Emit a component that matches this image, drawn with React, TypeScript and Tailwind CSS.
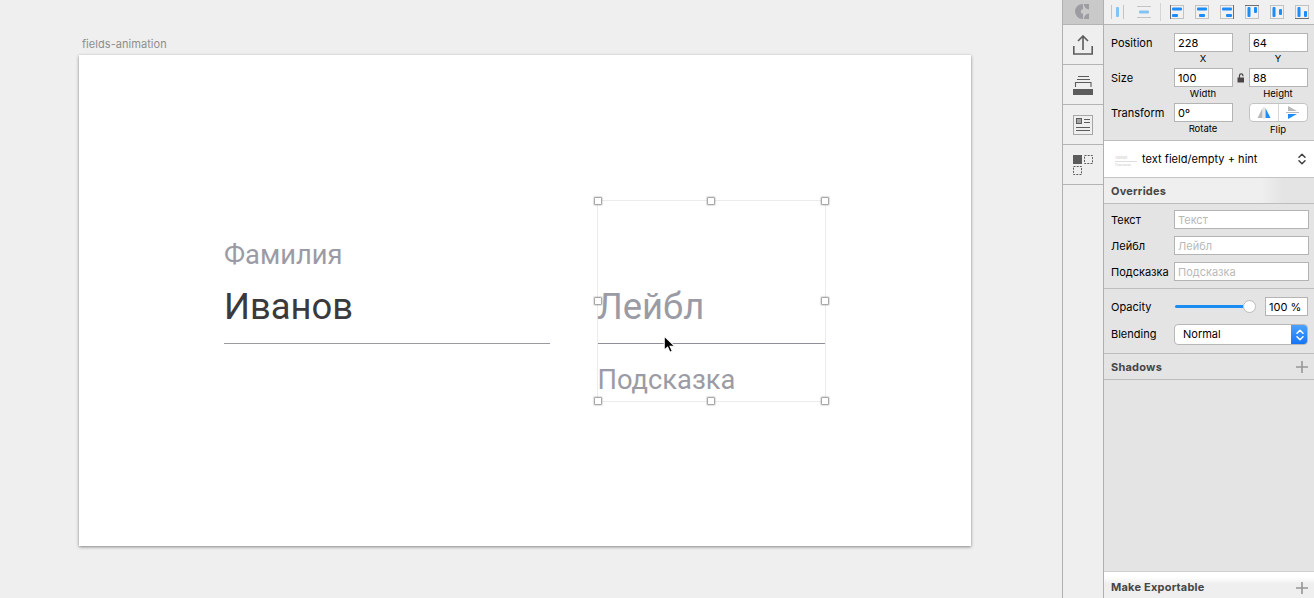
import React from 'react';
import clsx from 'clsx';

type AlignKind = 'left' | 'center' | 'right' | 'top' | 'middle' | 'bottom';

// x, y, width, height of the two blue bars in every align icon
const alignBars: Record<AlignKind, number[][]> = {
  left: [[2, 2.5, 10, 3], [2, 9, 6, 3]],
  center: [[2, 2.5, 10, 3], [4, 9, 6, 3]],
  right: [[2, 2.5, 10, 3], [6, 9, 6, 3]],
  top: [[2.5, 2, 3, 10], [9, 2, 3, 6]],
  middle: [[2.5, 2, 3, 10], [9, 4, 3, 6]],
  bottom: [[2.5, 2, 3, 10], [9, 6, 3, 6]],
};

const alignEdges: Partial<Record<AlignKind, string>> = {
  left: 'M.5 0v14',
  right: 'M13.5 0v14',
  top: 'M0 .5h14',
  bottom: 'M0 13.5h14',
};

const AlignIcon = ({ kind }: { kind: AlignKind }) => (
  <svg width="14" height="14" viewBox="0 0 14 14" className="shrink-0">
    <rect x=".5" y=".5" width="13" height="13" fill="#f2f2f2" stroke="#c2c2c2" />
    {alignEdges[kind] && <path d={alignEdges[kind]} stroke="#6f6f6f" />}
    {alignBars[kind].map(([x, y, w, h], i) => (
      <rect key={i} x={x} y={y} width={w} height={h} rx="1" fill="#1c8cf8" />
    ))}
  </svg>
);

const Chevrons = ({ className }: { className?: string }) => (
  <svg width="8" height="12" viewBox="0 0 8 12" fill="none" strokeWidth="1.5" strokeLinecap="round" strokeLinejoin="round" className={className}>
    <path d="M1 4.2 4 1.2l3 3M1 7.8l3 3 3-3" />
  </svg>
);

const Plus = () => (
  <svg width="12" height="12" viewBox="0 0 12 12" stroke="#969696" strokeWidth="1.6">
    <path d="M6 0v12M0 6h12" />
  </svg>
);

const Label = ({ children, className }: { children: React.ReactNode; className?: string }) => (
  <span className={clsx('w-[63px] shrink-0 whitespace-nowrap', className)}>{children}</span>
);

const Field = ({ value, className }: { value: string; className?: string }) => (
  <div className={clsx('flex h-[19px] shrink-0 items-center border border-[#b4b4b4] bg-white px-[3px] pt-[2px]', className)}>
    {value}
  </div>
);

const Caption = ({ children, className }: { children: React.ReactNode; className?: string }) => (
  <span className={clsx('mt-px h-3 text-center text-[9.5px] leading-3', className)}>{children}</span>
);

const Override = ({ name }: { name: string }) => (
  <div className="flex h-[19px] items-center">
    <Label className="pt-[2px]">{name}</Label>
    <Field value={name} className="w-[135px] text-[#b9b9b9]" />
  </div>
);

const Tool = ({ children }: { children: React.ReactNode }) => (
  <div className="flex h-10 items-center justify-center border-b border-[#b4b4b4]">{children}</div>
);

const handles = [
  'left-[-4.5px] top-[-4.5px]',
  'left-[109px] top-[-4.5px]',
  'left-[223px] top-[-4.5px]',
  'left-[-4.5px] top-[95.5px]',
  'left-[223px] top-[95.5px]',
  'left-[-4.5px] top-[195.5px]',
  'left-[109px] top-[195.5px]',
  'left-[223px] top-[195.5px]',
];

const Canvas = () => (
  <main className="flex-1 pl-[79px] pt-[37px]">
    <div className="h-[18px] pl-[3px] text-[11px] leading-[15px] tracking-[0.05px] text-[#8e8e8e]">fields-animation</div>
    <div className="relative h-[491px] w-[892px] bg-white font-['Roboto',sans-serif] leading-none text-[#9b9ba5] shadow-[0_1px_3px_rgba(0,0,0,0.45)]">
      {/* Filled field */}
      <div className="absolute left-[145px] top-[186px] w-[326px]">
        <div className="text-[27.3px] leading-7">Фамилия</div>
        <div className="mt-[20px] text-[36.4px] leading-9 text-[#3b393b]">Иванов</div>
        <div className="mt-[18px] h-px bg-[#9a9aa3]" />
      </div>

      {/* Selected symbol */}
      <div className="absolute left-[518px] top-[145px] h-[202px] w-[229px] border border-[#ececec]">
        <div className="-ml-px mt-[88px] text-[36.4px] leading-9">Лейбл</div>
        <div className="mt-[18px] h-px bg-[#8f8f99]" />
        <div className="-ml-[0.5px] mt-[22px] text-[27.3px] leading-7">Подсказка</div>
        {handles.map((place) => (
          <span key={place} className={clsx('absolute size-[8px] rounded-[1px] border border-[#a8a8a8] bg-white shadow-[0_0_1px_1px_rgba(0,0,0,0.12)]', place)} />
        ))}
      </div>

      {/* Cursor */}
      <svg width="14" height="20" viewBox="0 0 14 20" className="absolute left-[584px] top-[280px]">
        <path d="M1.2 1v14.2l3.4-3.1 2.3 5.2 2.5-1.1-2.3-5h4.6z" fill="#000" stroke="#fff" strokeWidth="1.1" />
      </svg>
    </div>
  </main>
);

const Toolbar = () => (
  <aside className="w-[42px] shrink-0 border-x border-[#b0b0b0] bg-[#efefef]">
    <div className="flex h-[25px] items-center justify-center border-b border-[#b4b4b4] bg-[#c9c9c9] pb-[2px] pr-px">
      <svg width="15" height="15" viewBox="0 0 15 15" fill="#9c9ca2">
        <path d="M8 0v5.200a2.300 2.300 0 0 0 0 4.600V15H7.500a7.500 7.500 0 0 1 0-15z" />
        <path d="M9 0h5v5.500a5.300 5.300 0 0 1-5-5.500zM9 15h5V9.500a5.300 5.300 0 0 0-5 5.500z" />
      </svg>
    </div>
    <Tool>
      <svg width="20" height="20" viewBox="0 0 20 20" fill="none" stroke="#5c5c5c" strokeWidth="1.6">
        <path d="M.8 11v8h18.4v-8M10 15V1.5M5 6l5-5 5 5" />
      </svg>
    </Tool>
    <Tool>
      <svg width="20" height="20" viewBox="0 0 20 20" fill="none" stroke="#5c5c5c">
        <path d="M5 1.500h11M4 4.500h13M2.500 12V7.500h15.500V12" strokeWidth="1.1" />
        <path d="M0 14h20v6H0z" fill="#5c5c5c" stroke="none" />
      </svg>
    </Tool>
    <Tool>
      <svg width="20" height="20" viewBox="0 0 20 20" fill="none" stroke="#5c5c5c">
        <rect x=".5" y=".5" width="19" height="19" strokeDasharray="1 1" />
        <rect x="3.500" y="3.500" width="5" height="5" fill="#a5a5a5" />
        <path d="M11 4.500h6M11 7.500h6M3 12.500h14M3 15.500h14" />
      </svg>
    </Tool>
    <Tool>
      <svg width="20" height="20" viewBox="0 0 20 20" fill="none" stroke="#5c5c5c">
        <path d="M0 0h9v9H0z" fill="#5c5c5c" stroke="none" />
        <rect x="11.500" y=".5" width="8" height="8" strokeDasharray="2 1.200" />
        <rect x=".5" y="11.500" width="8" height="8" strokeDasharray="2 1.200" />
      </svg>
    </Tool>
  </aside>
);

const Inspector = () => (
  <aside className="flex w-[210px] shrink-0 flex-col bg-[#e4e4e4]">
    {/* Align */}
    <div className="flex h-[25px] items-center border-b border-[#b4b4b4] bg-[#f0f0f0] pl-[7px]">
      <svg width="14" height="14" viewBox="0 0 14 14" className="mr-3 shrink-0">
        <path d="M.5 0v14M12.500 0v14" stroke="#c4c4c4" />
        <rect x="5" y="2" width="3" height="10" rx="1" fill="#83c3f3" />
      </svg>
      <svg width="14" height="14" viewBox="0 0 14 14" className="shrink-0">
        <path d="M0 1.500h14M0 12.500h14" stroke="#c4c4c4" />
        <rect x="2" y="5.500" width="10" height="3" rx="1" fill="#83c3f3" />
      </svg>
      <div className="mx-[9px] h-[18px] w-px shrink-0 bg-[#d4d4d4]" />
      <div className="flex gap-[11px]">
        <AlignIcon kind="left" />
        <AlignIcon kind="center" />
        <AlignIcon kind="right" />
        <AlignIcon kind="top" />
        <AlignIcon kind="middle" />
        <AlignIcon kind="bottom" />
      </div>
    </div>

    {/* Geometry */}
    <div className="h-[116px] border-b border-[#bdbdbd] pl-[7px] pt-2">
      <div className="flex h-[19px] items-center">
        <Label className="pt-[2px]">Position</Label>
        <Field value="228" className="w-[59px]" />
        <Field value="64" className="ml-4 w-[59px]" />
      </div>
      <div className="flex h-4 pl-[63px]">
        <Caption className="w-[58px]">X</Caption>
        <Caption className="ml-[17px] w-[58px]">Y</Caption>
      </div>
      <div className="flex h-[19px] items-center">
        <Label className="pt-[2px]">Size</Label>
        <Field value="100" className="w-[59px]" />
        <svg width="8" height="10" viewBox="0 0 8 10" className="mx-1 shrink-0">
          <path d="M.5 4.500h6.500V9.500H.5z" fill="#4a4447" />
          <path d="M2.500 5V2.500a1.700 1.700 0 0 1 3.400 0v.7" fill="none" stroke="#4a4447" strokeWidth="1.200" />
        </svg>
        <Field value="88" className="w-[59px]" />
      </div>
      <div className="flex h-4 pl-[63px]">
        <Caption className="w-[58px]">Width</Caption>
        <Caption className="ml-[17px] w-[58px]">Height</Caption>
      </div>
      <div className="flex h-[19px] items-center">
        <Label className="pt-[2px]">Transform</Label>
        <Field value="0º" className="w-[59px]" />
        <div className="ml-4 flex h-[19px] w-[59px] rounded-[4px] border border-[#c3c3c3] bg-white">
          <div className="flex w-[29px] items-center justify-center border-r border-[#d6d6d6]">
            <svg width="14" height="12" viewBox="0 0 14 12">
              <path d="M5.500 1v10H.5z" fill="#b9b9b9" />
              <path d="M7 0v12" stroke="#cfcfcf" />
              <path d="M8.500 1v10h5z" fill="#1c8cf8" />
            </svg>
          </div>
          <div className="flex flex-1 items-center justify-center">
            <svg width="14" height="13" viewBox="0 0 14 13">
              <path d="M2 0v5h9z" fill="#b9b9b9" />
              <path d="M0 6.500h13" stroke="#b9b9b9" />
              <path d="M2 8v5l9-5z" fill="#1c8cf8" />
            </svg>
          </div>
        </div>
      </div>
      <div className="flex h-4 pl-[63px]">
        <Caption className="w-[58px]">Rotate</Caption>
        <Caption className="ml-[17px] w-[58px] pt-px">Flip</Caption>
      </div>
    </div>

    {/* Symbol */}
    <div className="flex h-[37px] items-center border-b border-[#c4c4c4] bg-white pl-[11px] pr-[8px]">
      <div className="mt-[7px] h-[14px] w-[22px] text-[4px] leading-[4px] text-[#c9c9c9]">
        <div className="border-b border-[#dedede] pb-px">Лейбл</div>
        <div className="mt-px text-[3px] leading-[5px]">Подсказка</div>
      </div>
      <span className="ml-[5px] flex-1 whitespace-nowrap pt-px tracking-[0.04px]">text field/empty + hint</span>
      <Chevrons className="stroke-[#404040]" />
    </div>

    {/* Overrides */}
    <div className="flex h-[26px] items-center border-b border-[#bdbdbd] bg-linear-to-r from-[#efefef] from-75% to-[#e4e4e4] to-85% pl-[7px] pt-[2px] font-bold tracking-[0.22px] text-[#464646]">
      Overrides
    </div>
    <div className="flex h-[85px] flex-col gap-[7px] border-b border-[#bdbdbd] pl-[7px] pt-[6px]">
      <Override name="Текст" />
      <Override name="Лейбл" />
      <Override name="Подсказка" />
    </div>

    {/* Appearance */}
    <div className="h-[65px] border-b border-[#bdbdbd] pl-[7px] pt-2">
      <div className="flex h-[19px] items-center">
        <Label className="mr-px pt-[2px]">Opacity</Label>
        <div className="flex w-[81px] items-center">
          <div className="h-[3px] w-[68px] rounded-l-full bg-[#1c8cf2]" />
          <div className="size-[13px] shrink-0 rounded-full border border-[#bcbcbc] bg-white" />
        </div>
        <Field value="100 %" className="ml-[9px] w-[43px] whitespace-nowrap" />
      </div>
      <div className="mt-2 flex h-[21px] items-center">
        <Label>Blending</Label>
        <div className="flex h-[21px] w-[134px] items-center overflow-hidden rounded-[4px] border border-[#b7b7b7] bg-white">
          <span className="flex-1 pl-2">Normal</span>
          <div className="-my-px -mr-px flex h-[21px] w-[17px] items-center justify-center bg-linear-to-b from-[#4da4fb] to-[#0f72f4]">
            <Chevrons className="stroke-white" />
          </div>
        </div>
      </div>
    </div>

    <div className="flex h-[26px] items-center justify-between border-b border-[#bdbdbd] pl-[7px] pr-[6px] font-bold tracking-[0.22px] text-[#464646]">
      <span className="pt-[2px]">Shadows</span>
      <Plus />
    </div>

    <div className="mt-auto flex h-[27px] items-center justify-between border-t border-[#cfcfcf] bg-linear-to-b from-white from-20% to-[#efefef] to-45% pl-[7px] pr-[6px] pt-[5px] font-bold tracking-[0.22px] text-[#464646]">
      Make Exportable
      <Plus />
    </div>
  </aside>
);

const App = () => {
  return (
    <div className="flex h-[598px] w-[1314px] overflow-hidden bg-[#efefef] font-['Inter',sans-serif] text-[11px] leading-[15px] text-black">
      <Canvas />
      <Toolbar />
      <Inspector />
    </div>
  );
};

export default App;
